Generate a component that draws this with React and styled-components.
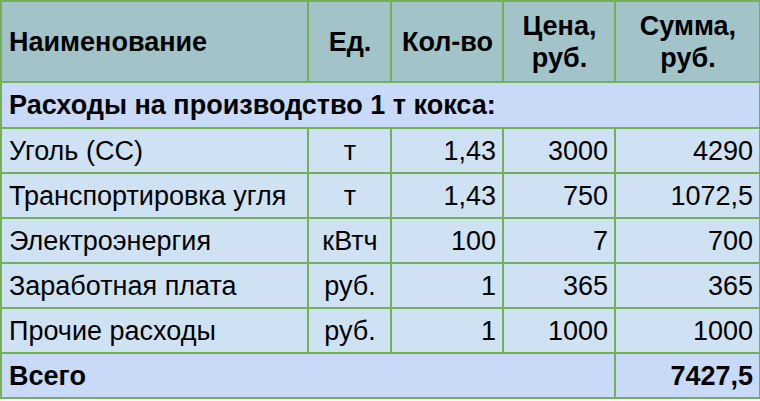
import React from "react";
import styled, { createGlobalStyle } from "styled-components";

const Global = createGlobalStyle`
  html, body { margin: 0; padding: 0; background: #fff; }
  body { font-family: "Liberation Sans", Arial, sans-serif; }
`;

const Table = styled.table`
  border-collapse: collapse;
  table-layout: fixed;
  width: 759px;
  font-family: "Liberation Sans", Arial, sans-serif;
  font-size: 27px;
  color: #000;
`;

const Col = styled.col`
  width: ${(p) => p.$w}px;
`;

const HeadCell = styled.th`
  background: #a2c4c9;
  border: 2px solid #74b05a;
  height: 79px;
  padding: 0 6px 0 7px;
  font-weight: bold;
  text-align: ${(p) => p.$align || "center"};
  line-height: 32px;
  vertical-align: middle;
`;

const Cell = styled.td`
  background: ${(p) => (p.$section ? "#c9daf8" : "#cfe2f3")};
  border: 2px solid #74b05a;
  height: ${(p) => p.$h || 43}px;
  padding: 0 6px 0 7px;
  font-weight: ${(p) => (p.$bold ? "bold" : "normal")};
  text-align: ${(p) => p.$align || "left"};
  vertical-align: middle;
  white-space: nowrap;
  line-height: 30px;
`;

const rows = [
  ["Уголь (СС)", "т", "1,43", "3000", "4290"],
  ["Транспортировка угля", "т", "1,43", "750", "1072,5"],
  ["Электроэнергия", "кВтч", "100", "7", "700"],
  ["Заработная плата", "руб.", "1", "365", "365"],
  ["Прочие расходы", "руб.", "1", "1000", "1000"],
];

export default function App() {
  return (
    <>
      <Global />
      <Table>
        <colgroup>
          <Col $w={307} />
          <Col $w={83} />
          <Col $w={112} />
          <Col $w={112} />
          <Col $w={145} />
        </colgroup>
        <thead>
          <tr>
            <HeadCell $align="left">Наименование</HeadCell>
            <HeadCell>Ед.</HeadCell>
            <HeadCell>Кол-во</HeadCell>
            <HeadCell>Цена,<br />руб.</HeadCell>
            <HeadCell>Сумма,<br />руб.</HeadCell>
          </tr>
        </thead>
        <tbody>
          <tr>
            <Cell $section $bold colSpan={5} $h={44}>
              Расходы на производство 1 т кокса:
            </Cell>
          </tr>
          {rows.map((r) => (
            <tr key={r[0]}>
              <Cell>{r[0]}</Cell>
              <Cell $align="center">{r[1]}</Cell>
              <Cell $align="right">{r[2]}</Cell>
              <Cell $align="right">{r[3]}</Cell>
              <Cell $align="right">{r[4]}</Cell>
            </tr>
          ))}
          <tr>
            <Cell $section $bold colSpan={4}>Всего</Cell>
            <Cell $section $bold $align="right">7427,5</Cell>
          </tr>
        </tbody>
      </Table>
    </>
  );
}
